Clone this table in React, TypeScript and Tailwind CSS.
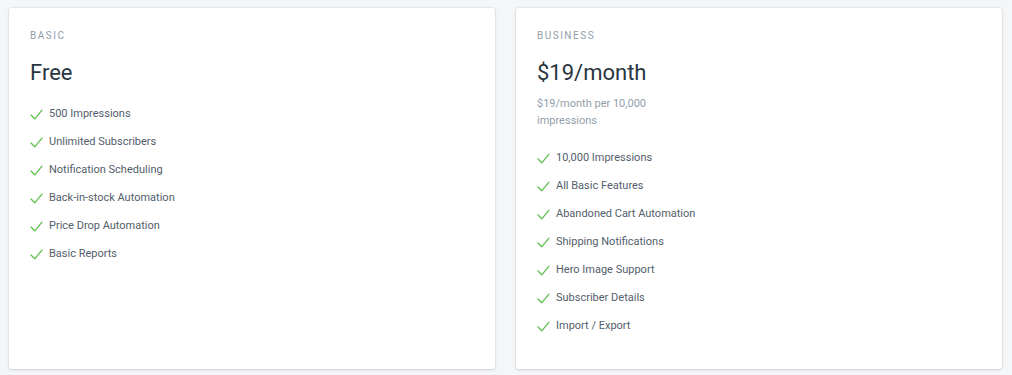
const CHECK = (
  <svg width="13" height="11" viewBox="0 0 13 11" fill="none" className="shrink-0">
    <path d="M1 6l3.8 3.8L12 1.2" stroke="#5fbf4e" strokeWidth="1.3" strokeLinecap="round" strokeLinejoin="round" />
  </svg>
)

type Plan = {
  name: string
  price: string
  note?: string[]
  features: string[]
}

const PLANS: Plan[] = [
  {
    name: 'Basic',
    price: 'Free',
    features: [
      '500 Impressions',
      'Unlimited Subscribers',
      'Notification Scheduling',
      'Back-in-stock Automation',
      'Price Drop Automation',
      'Basic Reports',
    ],
  },
  {
    name: 'Business',
    price: '$19/month',
    note: ['$19/month per 10,000', 'impressions'],
    features: [
      '10,000 Impressions',
      'All Basic Features',
      'Abandoned Cart Automation',
      'Shipping Notifications',
      'Hero Image Support',
      'Subscriber Details',
      'Import / Export',
    ],
  },
]

function PlanCard({ plan }: { plan: Plan }) {
  return (
    <div className="w-[486px] h-[361px] bg-white rounded-[3px] shadow-[0_0_0_1px_rgba(63,63,68,0.05),0_1px_3px_0_rgba(63,63,68,0.15)] px-[21px] pt-[16px]">
      <p className="text-[10px] leading-[24px] tracking-[0.15em] uppercase text-[#919eab]">{plan.name}</p>
      <h2 className="text-[22px] leading-[28px] mt-[11px] text-[#2a3540]">{plan.price}</h2>
      {plan.note && (
        <div className="mt-[8px] text-[11px] leading-[17px] text-[#919eab]">
          {plan.note.map((l, i) => (
            <p key={i}>{l}</p>
          ))}
        </div>
      )}
      <ul className={plan.note ? 'mt-[15px]' : 'mt-[13px]'}>
        {plan.features.map((f, i) => (
          <li key={i} className="flex items-center gap-[6px] h-[28px] text-[11px] text-[#525e6b]">
            {CHECK}
            <span>{f}</span>
          </li>
        ))}
      </ul>
    </div>
  )
}

export default function App() {
  return (
    <div
      className="w-[1012px] h-[375px] bg-[#f4f6f8] flex gap-[21px] pl-[9px] pt-[8px]"
      style={{ fontFamily: 'Roboto, "Liberation Sans", sans-serif' }}
    >
      {PLANS.map(p => (
        <PlanCard key={p.name} plan={p} />
      ))}
    </div>
  )
}
